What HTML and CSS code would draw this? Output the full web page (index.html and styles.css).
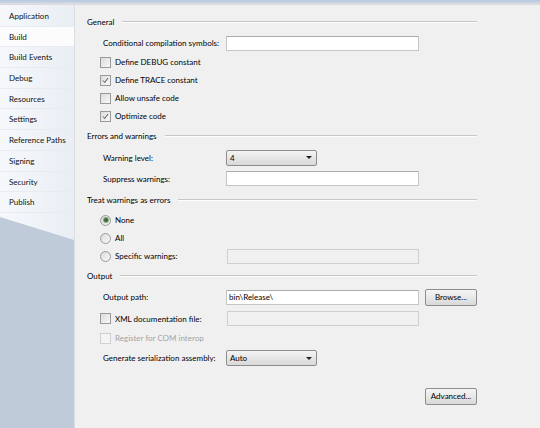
FILE: index.html
```html
<!DOCTYPE html>
<html lang="en">
  <head>
    <meta charset="UTF-8" />
    <title>Build Properties</title>
    <link rel="stylesheet" href="styles.css">
  </head>
  <body>
    <div class="top-strip"></div>
    <div class="window">
      <!--Tab list-->
      <div class="sidebar">
        <ul class="tabs">
          <li class="tab">Application</li>
          <li class="tab active">Build</li>
          <li class="tab">Build Events</li>
          <li class="tab">Debug</li>
          <li class="tab">Resources</li>
          <li class="tab">Settings</li>
          <li class="tab">Reference Paths</li>
          <li class="tab">Signing</li>
          <li class="tab">Security</li>
          <li class="tab">Publish</li>
        </ul>
      </div>

      <!--Page content-->
      <div class="panel">
        <div class="group-title first"><span>General</span><i></i></div>
        <div class="row input-row short gap-top">
          <span class="label">Conditional compilation symbols:</span>
          <span class="textbox"></span>
        </div>
        <div class="row"><span class="check"></span>Define DEBUG constant</div>
        <div class="row"><span class="check checked"><svg viewBox="0 0 11 11"><path d="M2.5 5.5 L4.5 8 L8.5 2.5" fill="none" stroke="#4a4a4a" stroke-width="1.2"/></svg></span>Define TRACE constant</div>
        <div class="row"><span class="check"></span>Allow unsafe code</div>
        <div class="row"><span class="check checked"><svg viewBox="0 0 11 11"><path d="M2.5 5.5 L4.5 8 L8.5 2.5" fill="none" stroke="#4a4a4a" stroke-width="1.2"/></svg></span>Optimize code</div>

        <div class="group-title"><span>Errors and warnings</span><i></i></div>
        <div class="row input-row gap-top">
          <span class="label">Warning level:</span>
          <span class="dropdown">4<b></b></span>
        </div>
        <div class="row input-row">
          <span class="label">Suppress warnings:</span>
          <span class="textbox"></span>
        </div>

        <div class="group-title"><span>Treat warnings as errors</span><i></i></div>
        <div class="row gap-top"><span class="radio selected"></span>None</div>
        <div class="row"><span class="radio"></span>All</div>
        <div class="row">
          <span class="label with-box"><span class="radio"></span>Specific warnings:</span>
          <span class="textbox disabled"></span>
        </div>

        <div class="group-title"><span>Output</span><i></i></div>
        <div class="row input-row tall gap-small">
          <span class="label">Output path:</span>
          <span class="textbox">bin\Release\</span>
          <span class="button">Browse...</span>
        </div>
        <div class="row input-row boxed">
          <span class="label with-box"><span class="check"></span>XML documentation file:</span>
          <span class="textbox disabled"></span>
        </div>
        <div class="row disabled-text"><span class="check faded"></span>Register for COM interop</div>
        <div class="row input-row tall">
          <span class="label">Generate serialization assembly:</span>
          <span class="dropdown">Auto<b></b></span>
        </div>

        <div class="actions">
          <span class="button">Advanced...</span>
        </div>
      </div>
    </div>
  </body>
</html>
```
FILE: styles.css
```css
body {
  margin: 0;
  width: 540px;
  height: 428px;
  overflow: hidden;
  font-family: Lato, "Open Sans", sans-serif;
  font-size: 8px;
  color: #000;
  background-color: #f0f0f0;
  white-space: nowrap;
}
.top-strip {
  height: 3px;
  background: linear-gradient(#b7c9df, #c9d6e6);
  border-bottom: 2px solid #dedbe0;
}
.window {
  display: flex;
  height: 423px;
}
/* Left tab list */
.sidebar {
  width: 74px;
  flex-shrink: 0;
  background-color: #bfcbd9;
  border-right: 1px solid #dadde3;
}
.tabs {
  list-style: none;
  margin: 0;
  padding: 1px 0 27px 0;
  background: linear-gradient(90deg, #f6f8fb, #e9eef4);
  clip-path: polygon(0 0, 100% 0, 100% 100%, 0 calc(100% - 23px));
}
.tab {
  height: 20.7px;
  line-height: 20px;
  padding-left: 9px;
  box-sizing: border-box;
  border-bottom: 1px solid #e8ecf1;
  color: #111;
}
.tab.active {
  background-color: #fcfcfd;
}
/* Property page */
.panel {
  flex: 1;
  min-width: 0;
  padding: 8px 63px 0 12px;
  background-color: #f0f0f0;
}
.group-title {
  display: flex;
  align-items: center;
  height: 18px;
  margin-top: 2px;
}
.group-title.first {
  margin-top: 0;
}
.group-title i {
  flex: 1;
  height: 0;
  border-top: 1px solid #c7c7c7;
  border-bottom: 1px solid #fdfdfd;
  margin-left: 8px;
}
.row {
  display: flex;
  align-items: center;
  height: 18px;
  padding-left: 13px;
}
.row > * {
  flex-shrink: 0;
}
.input-row {
  padding-left: 16px;
  height: 21px;
}
.input-row.short {
  height: 20px;
}
.input-row.tall {
  height: 22px;
}
.input-row.boxed {
  padding-left: 13px;
}
.gap-top {
  margin-top: 2px;
}
.gap-small {
  margin-top: 1px;
}
.label {
  width: 123px;
  display: flex;
  align-items: center;
}
.label.with-box {
  width: 127px;
}
.textbox {
  width: 189px;
  height: 13px;
  line-height: 13px;
  border: 1px solid #c5c5c5;
  border-top-color: #acacac;
  background-color: #ffffff;
  padding-left: 2px;
}
.textbox.disabled {
  width: 188px;
  background-color: #f0f0f0;
  border-color: #cfcfcf;
}
.check,
.radio {
  width: 9px;
  height: 9px;
  border: 1px solid #9a9a9a;
  background: linear-gradient(135deg, #dcdcdc, #f8f8f8);
  margin-right: 4px;
  display: flex;
}
.check svg {
  width: 9px;
  height: 9px;
}
.check.faded {
  border-color: #d0d0d0;
  background: #f4f4f4;
}
.radio {
  border-radius: 50%;
  align-items: center;
  justify-content: center;
}
.radio.selected::after {
  content: "";
  width: 4px;
  height: 4px;
  border-radius: 50%;
  background-color: #3f6b3b;
  box-shadow: 0 0 1px 1px #7fa57a;
}
.disabled-text {
  color: #a3a3a3;
}
.dropdown {
  width: 86px;
  height: 14px;
  line-height: 14px;
  padding-left: 3px;
  border: 1px solid #8d8d8d;
  border-radius: 2px;
  background: linear-gradient(#f4f4f4, #e6e6e6 50%, #d9d9d9);
  display: flex;
  justify-content: space-between;
  align-items: center;
}
.dropdown b {
  width: 0;
  height: 0;
  border-left: 3px solid transparent;
  border-right: 3px solid transparent;
  border-top: 3px solid #222;
  margin-right: 4px;
}
.button {
  width: 50px;
  height: 15px;
  line-height: 14px;
  text-align: center;
  border: 1px solid #8d8d8d;
  border-radius: 2px;
  background: linear-gradient(#f5f5f5, #e8e8e8 50%, #d8d8d8);
  margin-left: 6px;
}
.actions {
  display: flex;
  justify-content: flex-end;
  margin-top: 19px;
}
```
